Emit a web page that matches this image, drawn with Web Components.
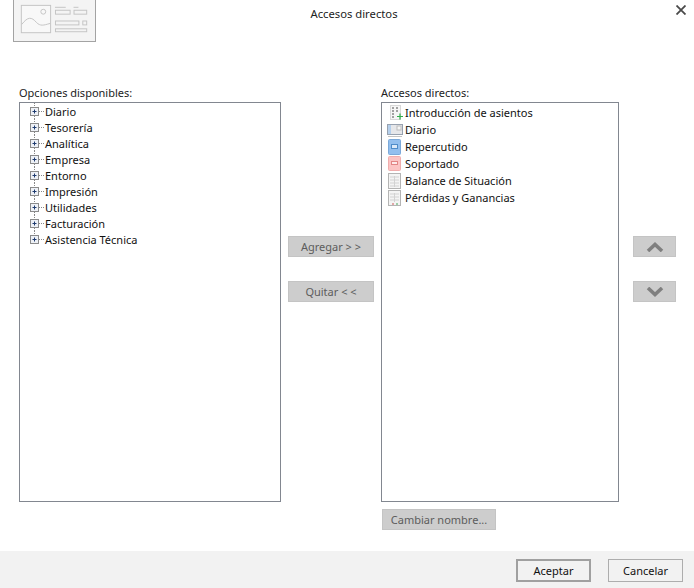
<!DOCTYPE html>
<html lang="es">
<head>
<meta charset="utf-8">
<title>Accesos directos</title>
<style>
    html, body { margin: 0; padding: 0; background: #fff; }
    body { font-family: "Noto Sans", "Open Sans", sans-serif; font-size: 11px; color: #111; }
</style>
</head>
<body>
<shortcuts-dialog></shortcuts-dialog>

<script>
// iconos de la lista derecha, 16x16
const ICONS = {
    entry: `<rect x="3.500" y=".5" width="10" height="14" fill="#f6f6f6" stroke="#d8d8d8"/>
        <path d="M5 3h2M9 3h2M5 6h2M9 6h2M5 9h2M5 12h2" stroke="#858585" stroke-width="1.300"/>
        <path d="M10 11.500h6M13 8.500v6" stroke="#2fae48" stroke-width="1.200"/>`,
    journal: `<rect x=".5" y="2.500" width="15" height="10" fill="#e6e7ea" stroke="#98a2b0"/>
        <rect x="1" y="3" width="3" height="9" fill="#b4cfec"/>
        <rect x="10" y="4" width="4" height="4" fill="#f6f6f6" stroke="#bcbcbc"/>
        <path d="M1 14.500h14" stroke="#c4c4c4"/>`,
    blue: `<rect x="1.500" y=".5" width="12" height="15" rx="1" fill="#93bfee" stroke="#7ba9da"/>
        <rect x="4.500" y="5.500" width="6" height="4" fill="#dbe9f8" stroke="#4f8cc9"/>`,
    red: `<rect x="1.500" y=".5" width="12" height="14" rx="1" fill="#fcc4c4" stroke="#f0adad"/>
        <rect x="4.500" y="5.500" width="6" height="3" fill="#fdeaea" stroke="#e38585"/>`,
    sheet: `<rect x="1.500" y=".5" width="12" height="15" fill="#f4f4f4" stroke="#b4b4b4"/>
        <path d="M3 4h9M3 7h9M3 10h9M3 13h9M7.500 3v11" stroke="#d2d2d2"/>`,
    sheetmark: `<rect x="1.500" y=".5" width="12" height="15" fill="#f4f4f4" stroke="#b4b4b4"/>
        <path d="M3 4h9M3 7h9M3 10h9M7.500 3v9" stroke="#d2d2d2"/>
        <path d="M5 14h2" stroke="#d05a5a"/><path d="M9 14h2" stroke="#4aa85a"/>`
};

class DlgHeader extends HTMLElement {
    constructor() {
        super();
        this.attachShadow({ mode: 'open' });
        this.shadowRoot.innerHTML = `
            <style>
                :host { display: block; position: relative; height: 42px; }
                .logo { display: block; margin-left: 13px; width: 83px; height: 42px; box-sizing: border-box;
                    border: 1px solid #a3a3a3; border-top: none; background: #f4f4f4; }
                .title { position: absolute; left: 14px; right: 0; top: 6px; text-align: center; font-size: 11.25px; color: #222; line-height: 16px; }
                .close { position: absolute; left: 676px; top: 5px; width: 10px; height: 10px; }
            </style>
            <svg class="logo" viewBox="0 0 83 42" fill="none" stroke="#c4c4c4">
                <rect x="7.500" y="5.500" width="30" height="28" fill="#f8f8f8"/>
                <circle cx="30" cy="12" r="2.500"/>
                <path d="M8 25c6-8 10-8 15-2 4 4 7 3 14 1" />
                <path d="M42 7.500h11M61 7.500h5"/>
                <rect x="42.500" y="10.500" width="15" height="4"/><rect x="61.500" y="10.500" width="13" height="4"/>
                <rect x="42.500" y="21.500" width="24" height="4"/><rect x="70.500" y="21.500" width="4" height="4"/>
                <rect x="42.500" y="29.500" width="32" height="3"/>
            </svg>
            <div class="title"><slot></slot></div>
            <svg class="close" viewBox="0 0 10 10" stroke="#4a4a4a" stroke-width="1.800"><path d="M.5.5l9 9M9.500.5l-9 9"/></svg>
        `;
    }
}

class DlgButton extends HTMLElement {
    constructor() {
        super();
        this.attachShadow({ mode: 'open' });
        this.shadowRoot.innerHTML = `
            <style>
                :host { display: flex; align-items: center; justify-content: center; box-sizing: border-box;
                    height: 21px; background: #cdcdcd; border: 1px solid #c4c4c4; color: #5c5c5c; line-height: 1; }
                :host([primary]), :host([plain]) { background: #f2f2f2; color: #111; height: 23px; border-color: #adadad; }
                :host([primary]) { border-width: 2px; border-color: #a0a0a0; }
                svg { display: block; width: 18px; height: 10px; fill: none; stroke: #7f7f7f; stroke-width: 3.600; }
            </style>
            <slot></slot>
        `;
        const dir = this.getAttribute('arrow');
        if (dir) {
            const d = dir === 'up' ? 'M2 9L9 2.500 16 9' : 'M2 1L9 7.500 16 1';
            this.shadowRoot.innerHTML += `<svg viewBox="0 0 18 10"><path d="${d}"/></svg>`;
        }
    }
}

class TreeList extends HTMLElement {
    constructor() {
        super();
        this.attachShadow({ mode: 'open' });
        this.shadowRoot.innerHTML = `
            <style>
                :host { display: flex; flex-direction: column; min-height: 0; }
                .label { height: 17px; line-height: 15px; color: #222; }
                .box { flex: 1; box-sizing: border-box; border: 1px solid #828790; background: #fff; padding: 0 0 0 9px; }
            </style>
            <div class="label"></div>
            <div class="box"><slot></slot></div>
        `;
        this.shadowRoot.querySelector('.label').textContent = this.getAttribute('label');
    }
}

class TreeNode extends HTMLElement {
    constructor() {
        super();
        this.attachShadow({ mode: 'open' });
        this.shadowRoot.innerHTML = `
            <style>
                :host { display: flex; align-items: center; height: 16px; color: #111; }
                svg { flex: none; width: 16px; height: 16px; }
                :host(:last-child) .down { display: none; }
            </style>
            <svg viewBox="0 0 16 16" fill="none">
                <path class="down" d="M5.500 13v3" stroke="#888" stroke-dasharray="1 1"/>
                <path d="M5.500 0v4" stroke="#888" stroke-dasharray="1 1"/>
                <path d="M10 8.500h5" stroke="#888" stroke-dasharray="1 1"/>
                <rect x="1.500" y="4.500" width="8" height="8" fill="#eef1f6" stroke="#8b8b8b"/>
                <path d="M3.500 8.500h4M5.500 6.500v4" stroke="#1e3a6e"/>
            </svg>
            <slot></slot>
        `;
    }
}

class ShortcutItem extends HTMLElement {
    constructor() {
        super();
        this.attachShadow({ mode: 'open' });
        const icon = ICONS[this.getAttribute('icon')] || '';
        this.shadowRoot.innerHTML = `
            <style>
                :host { display: flex; align-items: center; height: 17px; color: #111; margin-left: -4px; position: relative; top: 1px; }
                svg { flex: none; width: 16px; height: 16px; margin-right: 2px; }
            </style>
            <svg viewBox="0 0 16 16">${icon}</svg>
            <slot></slot>
        `;
    }
}

class ShortcutsDialog extends HTMLElement {
    constructor() {
        super();
        this.attachShadow({ mode: 'open' });
        this.shadowRoot.innerHTML = `
            <style>
                :host { display: flex; flex-direction: column; width: 694px; height: 588px; overflow: hidden; }
                .main { height: 509px; box-sizing: border-box; display: grid; grid-template-columns: 262px 100px 238px 57px; grid-template-rows: 417px 1fr; padding: 43px 0 0 19px; }
                .mid { display: flex; flex-direction: column; gap: 24px; padding: 151px 0 0 7px; width: 86px; }
                .arrows { display: flex; flex-direction: column; gap: 24px; padding: 151px 0 0 14px; width: 43px; }
                .rename { grid-column: 3; padding: 7px 0 0 1px; width: 114px; }
                .foot { height: 37px; box-sizing: border-box; background: #f2f2f2; display: flex; justify-content: flex-end; align-items: flex-start; gap: 17px; padding: 8px 11px 0 0; }
                .foot dlg-button { width: 75px; }
            </style>
            <dlg-header>Accesos directos</dlg-header>
            <div class="main">
                <tree-list label="Opciones disponibles:">
                    <tree-node>Diario</tree-node>
                    <tree-node>Tesorería</tree-node>
                    <tree-node>Analítica</tree-node>
                    <tree-node>Empresa</tree-node>
                    <tree-node>Entorno</tree-node>
                    <tree-node>Impresión</tree-node>
                    <tree-node>Utilidades</tree-node>
                    <tree-node>Facturación</tree-node>
                    <tree-node>Asistencia Técnica</tree-node>
                </tree-list>
                <div class="mid">
                    <dlg-button>Agregar &gt; &gt;</dlg-button>
                    <dlg-button>Quitar &lt; &lt;</dlg-button>
                </div>
                <tree-list label="Accesos directos:">
                    <shortcut-item icon="entry">Introducción de asientos</shortcut-item>
                    <shortcut-item icon="journal">Diario</shortcut-item>
                    <shortcut-item icon="blue">Repercutido</shortcut-item>
                    <shortcut-item icon="red">Soportado</shortcut-item>
                    <shortcut-item icon="sheet">Balance de Situación</shortcut-item>
                    <shortcut-item icon="sheetmark">Pérdidas y Ganancias</shortcut-item>
                </tree-list>
                <div class="arrows">
                    <dlg-button arrow="up"></dlg-button>
                    <dlg-button arrow="down"></dlg-button>
                </div>
                <div class="rename"><dlg-button>Cambiar nombre...</dlg-button></div>
            </div>
            <div class="foot">
                <dlg-button primary>Aceptar</dlg-button>
                <dlg-button plain>Cancelar</dlg-button>
            </div>
        `;
    }
}

customElements.define('dlg-header', DlgHeader);
customElements.define('dlg-button', DlgButton);
customElements.define('tree-list', TreeList);
customElements.define('tree-node', TreeNode);
customElements.define('shortcut-item', ShortcutItem);
customElements.define('shortcuts-dialog', ShortcutsDialog);
</script>
</body>
</html>
